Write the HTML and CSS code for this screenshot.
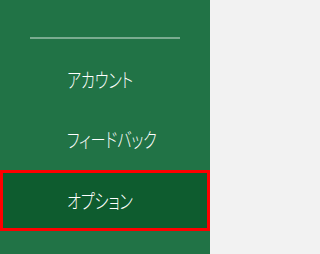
FILE: index.html
```html
<!DOCTYPE html>
<html lang="ja">
<head>
<meta charset="utf-8">
<link rel="stylesheet" href="styles.css">
</head>
<body>
<div class="layout">
  <nav class="sidebar">
    <div class="divider"></div>
    <ul class="menu">
      <li class="item"><span class="label">アカウント</span></li>
      <li class="item"><span class="label">フィードバック</span></li>
      <li class="item selected"><span class="label">オプション</span></li>
    </ul>
  </nav>
  <main class="content"></main>
</div>
</body>
</html>
```
FILE: styles.css
```css
html, body {
  margin: 0;
  padding: 0;
  height: 100%;
}
body {
  font-family: "Noto Sans CJK JP", "Noto Sans", sans-serif;
  background: #f2f2f2;
}
.layout {
  display: flex;
  height: 100%;
}
.sidebar {
  width: 210px;
  flex: 0 0 210px;
  background: #217346;
  padding-top: 37px;
  box-sizing: border-box;
}
.divider {
  margin-left: 30px;
  width: 150px;
  height: 2px;
  background: #7aab90;
}
.menu {
  list-style: none;
  margin: 11px 0 0;
  padding: 0;
}
.item {
  height: 60px;
  display: flex;
  align-items: center;
  padding-left: 67px;
  color: #ffffff;
  font-size: 20px;
  font-weight: 300;
  line-height: 1;
  font-feature-settings: "palt" 1;
  box-sizing: border-box;
}
.label {
  display: inline-block;
  white-space: nowrap;
  letter-spacing: -0.3px;
  transform: scaleX(0.76);
  transform-origin: left center;
}
.item.selected {
  background: #0e5c2f;
  border: 3px solid #ff0000;
  padding-left: 64px;
  height: 61px;
}
.content {
  flex: 1;
  background: #f2f2f2;
}
```
